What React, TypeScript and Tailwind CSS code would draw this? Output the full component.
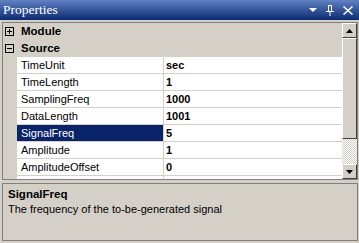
import React from 'react';

type Prop = { name: string; value: string };

const props: Prop[] = [
    { name: 'TimeUnit', value: 'sec' },
    { name: 'TimeLength', value: '1' },
    { name: 'SamplingFreq', value: '1000' },
    { name: 'DataLength', value: '1001' },
    { name: 'SignalFreq', value: '5' },
    { name: 'Amplitude', value: '1' },
    { name: 'AmplitudeOffset', value: '0' },
    // partially visible row below, text hidden by the scroll clip
    { name: '', value: '' },
];

const selected = 'SignalFreq';

function Expander({ open }: { open: boolean }) {
    return (
        <div className="w-[9px] h-[9px] border border-black bg-[#d4d0c8] relative">
            <div className="absolute left-[1px] top-[3px] w-[5px] h-[1px] bg-black" />
            {!open && <div className="absolute left-[3px] top-[1px] w-[1px] h-[5px] bg-black" />}
        </div>
    );
}

function Category({ label, open }: { label: string; open: boolean }) {
    return (
        <div className="h-[17px] flex items-center">
            <div className="w-[18px] pl-[2px] flex items-center">
                <Expander open={open} />
            </div>
            <span className="font-bold text-[11.5px] text-black">{label}</span>
        </div>
    );
}

function Row({ p }: { p: Prop }) {
    const sel = p.name === selected;
    return (
        <div className="h-[17px] flex">
            <div className="w-[14px] shrink-0" />
            <div
                className={`w-[147px] shrink-0 border-b border-r border-[#d4d0c8] pl-[4px] flex items-center ${
                    sel ? 'bg-[#0a246a] text-white' : 'bg-white text-black'
                }`}
            >
                {p.name}
            </div>
            <div className="flex-1 bg-white border-b border-[#d4d0c8] pl-[2px] flex items-center font-bold text-black">
                {p.value}
            </div>
        </div>
    );
}

function ScrollBtn({ down }: { down?: boolean }) {
    return (
        <div className="h-[15px] w-[15px] bg-[#d4d0c8] border-t border-l border-white border-r border-b border-r-[#404040] border-b-[#404040] flex items-center justify-center">
            <svg width="7" height="4" viewBox="0 0 7 4">
                {down ? <path d="M0 0h7L3.5 4z" fill="#000" /> : <path d="M0 4h7L3.5 0z" fill="#000" />}
            </svg>
        </div>
    );
}

export default function App() {
    return (
        <div className="w-[359px] h-[243px] bg-[#d4d0c8] overflow-hidden text-[11px] font-['Liberation_Sans',Arial,sans-serif]">
            <div className="h-[20px] bg-gradient-to-b from-[#6282c4] to-[#0c2a72] flex items-center pl-[3px] pr-[6px]">
                <span className="text-white text-[13.5px] font-['Liberation_Serif',serif]">Properties</span>
                <div className="ml-auto flex items-center gap-[9px]">
                    <svg width="8" height="4" viewBox="0 0 8 4">
                        <path d="M0 0h8L4 4z" fill="#fff" />
                    </svg>
                    <svg width="8" height="11" viewBox="0 0 8 11">
                        <path d="M2 0.5h4M2.5 0.5v6M5.5 0.5v6M0 6.5h8M4 6.5v4.5" stroke="#fff" strokeWidth="1" fill="none" />
                    </svg>
                    <svg width="10" height="9" viewBox="0 0 10 9">
                        <path d="M0.5 0.5l9 8M9.5 0.5l-9 8" stroke="#fff" strokeWidth="1.5" fill="none" />
                    </svg>
                </div>
            </div>

            <div className="mt-[2px] ml-[2px] w-[356px] h-[158px] border border-[#808080] flex">
                <div className="flex-1 overflow-hidden">
                    <Category label="Module" open={false} />
                    <Category label="Source" open={true} />
                    {props.map((p, i) => (
                        <Row key={i} p={p} />
                    ))}
                </div>
                <div className="w-[15px] flex flex-col">
                    <ScrollBtn />
                    <div className="h-[101px] bg-[#d4d0c8] border-t border-l border-white border-r border-b border-r-[#404040] border-b-[#404040]" />
                    <div className="flex-1 bg-[repeating-conic-gradient(#d4d0c8_0_25%,#fff_0_50%)] bg-[length:2px_2px]" />
                    <ScrollBtn down />
                </div>
            </div>

            <div className="mt-[3px] ml-[2px] w-[356px] h-[58px] border border-[#808080] px-[5px] pt-[3px] text-black">
                <div className="font-bold text-[11.5px] leading-[15px]">SignalFreq</div>
                <div className="leading-[15px]">The frequency of the to-be-generated signal</div>
            </div>
        </div>
    );
}
